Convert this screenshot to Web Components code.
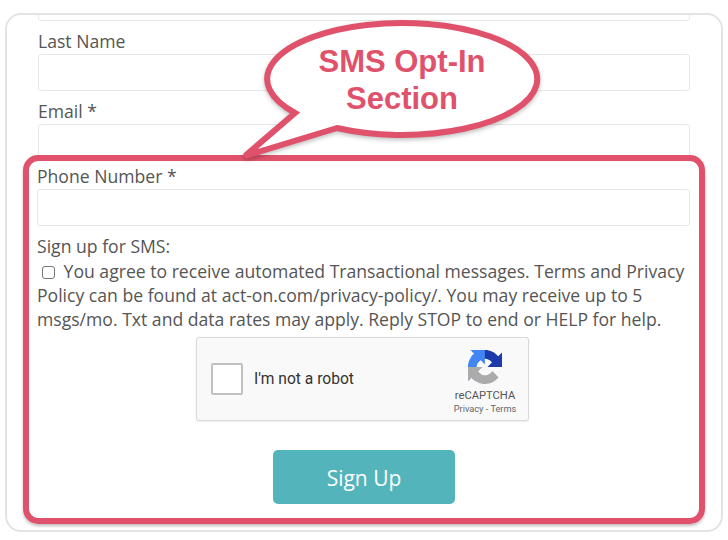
<!DOCTYPE html>
<html lang="en">
<head>
<meta charset="utf-8">
<title>SMS Opt-In</title>
<style>
  html, body { margin: 0; background: #fff; }
  body { font-family: "Open Sans", sans-serif; color: #555; }
</style>
</head>
<body>
<signup-card>
  <text-box class="cut"></text-box>
  <form-field label="Last Name" gap="8"></form-field>
  <form-field label="Email *" gap="8"></form-field>
  <opt-in-section>
    <form-field label="Phone Number *" gap="3"></form-field>
    <sms-consent>You agree to receive automated Transactional messages. Terms and Privacy Policy can be found at act-on.com/privacy-policy/. You may receive up to 5 msgs/mo. Txt and data rates may apply. Reply STOP to end or HELP for help.</sms-consent>
    <recaptcha-box></recaptcha-box>
    <sign-up-button>Sign Up</sign-up-button>
  </opt-in-section>
  <callout-bubble>SMS Opt-In<br>Section</callout-bubble>
</signup-card>

<script>
class SignupCard extends HTMLElement {
  constructor() {
    super();
    this.attachShadow({ mode: 'open' });
    this.shadowRoot.innerHTML = `
      <style>
        :host {
          display: block;
          position: relative;
          box-sizing: border-box;
          width: 718px;
          height: 519px;
          margin: 13px 0 0 5px;
          padding: 0 31px;
          border: 2px solid #e4e4e4;
          border-radius: 16px;
          overflow: hidden;
          background: #fff;
        }
        ::slotted(.cut) { margin-top: -31px; }
      </style>
      <slot></slot>
    `;
  }
}

class TextBox extends HTMLElement {
  constructor() {
    super();
    this.attachShadow({ mode: 'open' });
    this.shadowRoot.innerHTML = `
      <style>
        :host { display: block; }
        input {
          display: block;
          box-sizing: border-box;
          width: 100%;
          height: 37px;
          margin: 0;
          background: #fff;
          border: 1px solid #e8e8e8;
          border-radius: 3px;
        }
      </style>
      <input type="text">
    `;
  }
}

class FormField extends HTMLElement {
  constructor() {
    super();
    this.attachShadow({ mode: 'open' });
    this.shadowRoot.innerHTML = `
      <style>
        :host { display: block; }
        label { display: block; font-size: 17.6px; line-height: 24px; color: #555; margin-bottom: 1px; }
      </style>
      <label></label>
      <text-box></text-box>
    `;
  }
  connectedCallback() {
    this.shadowRoot.querySelector('label').textContent = this.getAttribute('label');
    this.style.marginTop = (this.getAttribute('gap') || 0) + 'px';
  }
}

class OptInSection extends HTMLElement {
  constructor() {
    super();
    this.attachShadow({ mode: 'open' });
    this.shadowRoot.innerHTML = `
      <style>
        :host {
          display: block;
          box-sizing: border-box;
          height: 369px;
          margin: -6px -15px 0 -15px;
          padding: 0 9px 0 8px;
          border: 6px solid #e0526b;
          border-radius: 15px;
          box-shadow: 0 2px 3px rgba(0, 0, 0, .25);
        }
      </style>
      <slot></slot>
    `;
  }
}

class SmsConsent extends HTMLElement {
  constructor() {
    super();
    this.attachShadow({ mode: 'open' });
    this.shadowRoot.innerHTML = `
      <style>
        :host { display: block; margin-top: 8px; font-size: 17.6px; line-height: 24px; color: #555; }
        .agree { margin-top: 1px; }
        input {
          appearance: none;
          box-sizing: border-box;
          width: 13px;
          height: 13px;
          margin: 0 4px 0 5px;
          vertical-align: -1px;
          background: #fff;
          border: 1px solid #777;
          border-radius: 3px;
        }
      </style>
      <div>Sign up for SMS:</div>
      <div class="agree"><input type="checkbox"> <slot></slot></div>
    `;
  }
}

class RecaptchaBox extends HTMLElement {
  constructor() {
    super();
    this.attachShadow({ mode: 'open' });
    this.shadowRoot.innerHTML = `
      <style>
        :host {
          display: flex;
          align-items: center;
          box-sizing: border-box;
          width: 333px;
          height: 84px;
          margin: 6px 0 0 159px;
          padding: 0 11px 0 14px;
          background: #f9f9f9;
          border: 1px solid #d9d9d9;
          border-radius: 3px;
          box-shadow: 0 1px 2px rgba(0, 0, 0, .08);
          font-family: Roboto, "Liberation Sans", sans-serif;
        }
        .tick {
          box-sizing: border-box;
          width: 32px;
          height: 32px;
          background: #fff;
          border: 2px solid #c1c1c1;
          border-radius: 2px;
        }
        .text { flex: 1; margin-left: 11px; font-size: 15.6px; color: #333; }
        .brand {
          display: flex;
          flex-direction: column;
          align-items: center;
          width: 64px;
          padding-top: 6px;
          color: #555;
        }
        svg { display: block; width: 34px; height: 34px; margin-bottom: 5px; }
        .name { font-size: 11.2px; line-height: 14px; }
        .links { font-size: 9.2px; line-height: 12px; color: #666; white-space: nowrap; }
      </style>
      <div class="tick"></div>
      <div class="text">I'm not a robot</div>
      <div class="brand">
        <svg viewBox="0 0 64 64">
          <path fill="#1c3aa9" d="M64 31.955l-.033-1.37V4.687l-7.16 7.16C50.948 4.674 42.033.093 32.05.093c-10.4 0-19.622 4.96-25.458 12.64l11.736 11.86a15.55 15.55 0 0 1 4.754-5.334c2.05-1.6 4.952-2.906 8.968-2.906.485 0 .86.057 1.135.163 4.976.393 9.288 3.14 11.828 7.124l-8.307 8.307c10.522-.04 22.4-.066 27.295.006"/>
          <path fill="#4285f4" d="M31.862.002l-1.37.033H4.594l7.16 7.16C4.58 13.05 0 21.967 0 31.95c0 10.4 4.96 19.622 12.64 25.458l11.86-11.736a15.55 15.55 0 0 1-5.334-4.754c-1.6-2.05-2.906-4.952-2.906-8.968 0-.485.057-.86.163-1.135.393-4.976 3.14-9.288 7.124-11.828l8.307 8.307c-.04-10.522-.066-22.4.006-27.295"/>
          <path fill="#ababab" d="M.002 31.953l.033 1.37v25.898l7.16-7.16c5.86 7.173 14.774 11.754 24.76 11.754 10.4 0 19.622-4.96 25.458-12.64l-11.736-11.86a15.55 15.55 0 0 1-4.754 5.334c-2.05 1.6-4.952 2.906-8.968 2.906-.485 0-.86-.057-1.135-.163-4.976-.393-9.288-3.14-11.828-7.124l8.307-8.307c-10.522.04-22.4.066-27.295-.006"/>
        </svg>
        <div class="name">reCAPTCHA</div>
        <div class="links">Privacy - Terms</div>
      </div>
    `;
  }
}

class SignUpButton extends HTMLElement {
  constructor() {
    super();
    this.attachShadow({ mode: 'open' });
    this.shadowRoot.innerHTML = `
      <style>
        :host {
          display: flex;
          align-items: center;
          justify-content: center;
          box-sizing: border-box;
          width: 182px;
          height: 54px;
          margin: 29px 0 0 236px;
          padding-top: 2px;
          background: #53b5bb;
          border-radius: 5px;
          color: #fff;
          font-size: 21px;
        }
      </style>
      <slot></slot>
    `;
  }
}

class CalloutBubble extends HTMLElement {
  constructor() {
    super();
    this.attachShadow({ mode: 'open' });
    this.shadowRoot.innerHTML = `
      <style>
        :host { position: absolute; left: 233px; top: 0; width: 306px; height: 145px; display: block; }
        svg { position: absolute; inset: 0; width: 100%; height: 100%; overflow: visible; filter: drop-shadow(0 2px 2px rgba(0, 0, 0, .25)); }
        .label {
          position: absolute;
          left: 26px;
          top: 28px;
          width: 272px;
          text-align: center;
          font-family: "Liberation Sans", Arial, sans-serif;
          font-weight: bold;
          font-size: 31px;
          line-height: 37px;
          color: #e0526b;
        }
      </style>
      <svg viewBox="240 15 306 145">
        <path d="M295 113L245 156L337 128A135 56 0 1 0 295 113Z" fill="#fff" stroke="#e0526b" stroke-width="6" stroke-linejoin="miter"/>
      </svg>
      <div class="label"><slot></slot></div>
    `;
  }
}

customElements.define('signup-card', SignupCard);
customElements.define('text-box', TextBox);
customElements.define('form-field', FormField);
customElements.define('opt-in-section', OptInSection);
customElements.define('sms-consent', SmsConsent);
customElements.define('recaptcha-box', RecaptchaBox);
customElements.define('sign-up-button', SignUpButton);
customElements.define('callout-bubble', CalloutBubble);
</script>
</body>
</html>
